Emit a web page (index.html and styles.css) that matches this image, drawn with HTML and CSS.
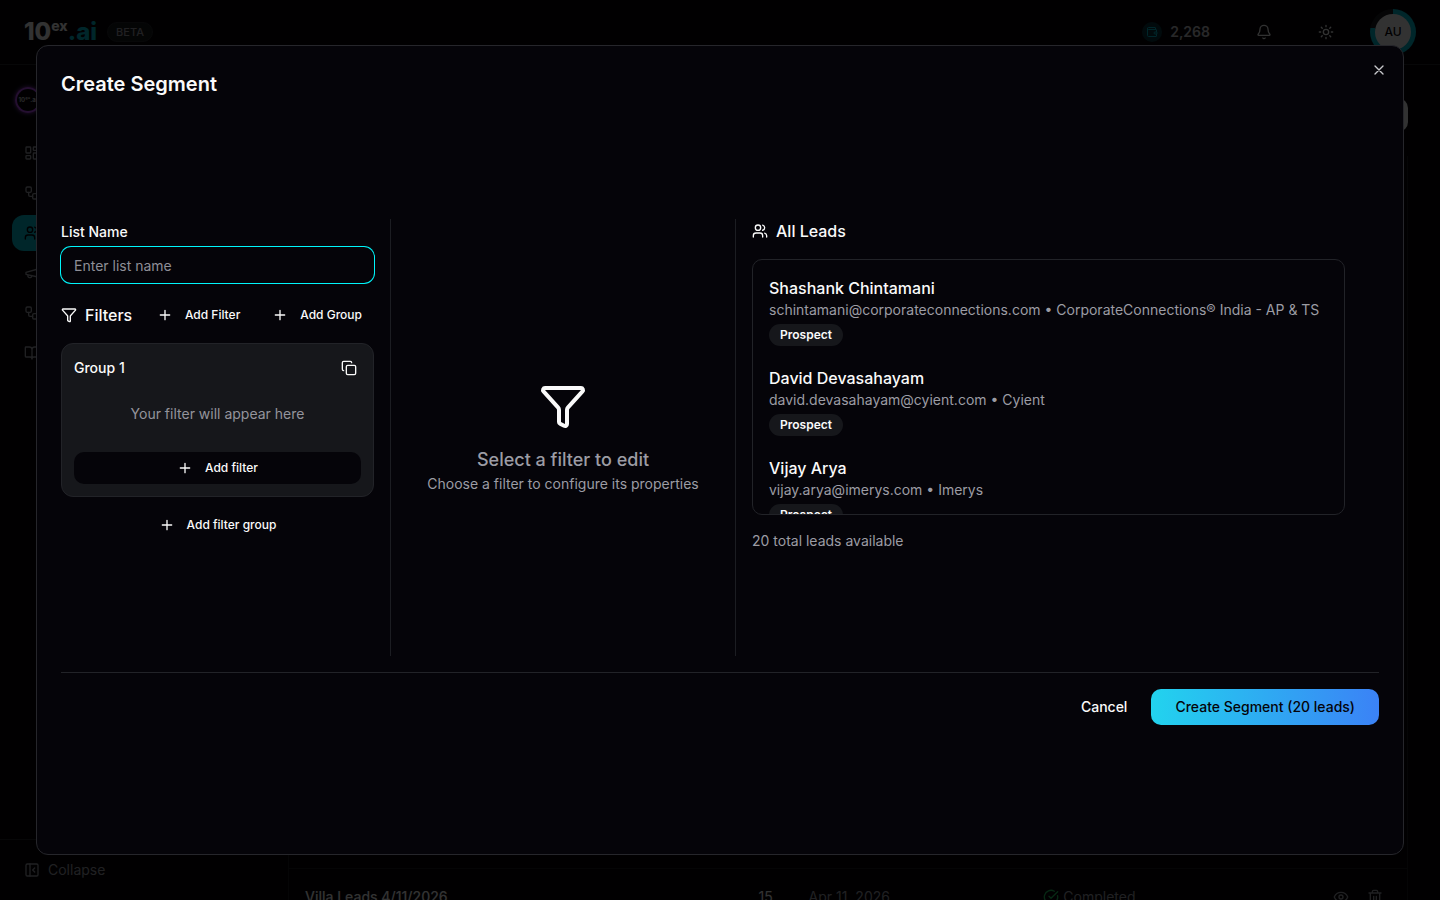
FILE: index.html
```html
<!DOCTYPE html>
<html lang="en">
<head>
    <meta charset="UTF-8">
    <meta name="viewport" content="width=device-width, initial-scale=1.0">
    <title>Create Segment</title>
    <link rel="stylesheet" href="styles.css">
</head>
<body>

    <!-- Icons -->
    <svg class="sprite" aria-hidden="true">
        <symbol id="i-plus" viewBox="0 0 24 24"><path d="M5 12h14M12 5v14"/></symbol>
        <symbol id="i-x" viewBox="0 0 24 24"><path d="M18 6 6 18M6 6l12 12"/></symbol>
        <symbol id="i-funnel" viewBox="0 0 24 24"><path d="M10 20a1 1 0 0 0 .553.895l2 1A1 1 0 0 0 14 21v-7a2 2 0 0 1 .517-1.341L21.74 4.67A1 1 0 0 0 21 3H3a1 1 0 0 0-.742 1.67l7.225 7.989A2 2 0 0 1 10 14z"/></symbol>
        <symbol id="i-copy" viewBox="0 0 24 24"><rect x="8" y="8" width="14" height="14" rx="2"/><path d="M4 16c-1.1 0-2-.9-2-2V4c0-1.100.9-2 2-2h10c1.100 0 2 .9 2 2"/></symbol>
        <symbol id="i-users" viewBox="0 0 24 24"><path d="M16 21v-2a4 4 0 0 0-4-4H6a4 4 0 0 0-4 4v2"/><circle cx="9" cy="7" r="4"/><path d="M22 21v-2a4 4 0 0 0-3-3.870M16 3.130a4 4 0 0 1 0 7.750"/></symbol>
        <symbol id="i-grid" viewBox="0 0 24 24"><rect x="3" y="3" width="7" height="9" rx="1"/><rect x="14" y="3" width="7" height="5" rx="1"/><rect x="14" y="12" width="7" height="9" rx="1"/><rect x="3" y="16" width="7" height="5" rx="1"/></symbol>
        <symbol id="i-flow" viewBox="0 0 24 24"><rect x="3" y="3" width="8" height="8" rx="2"/><path d="M7 11v4a2 2 0 0 0 2 2h4"/><rect x="13" y="13" width="8" height="8" rx="2"/></symbol>
        <symbol id="i-horn" viewBox="0 0 24 24"><path d="m3 11 18-5v12L3 14v-3zM11.600 16.800a3 3 0 1 1-5.800-1.600"/></symbol>
        <symbol id="i-book" viewBox="0 0 24 24"><path d="M12 7v14M3 18a1 1 0 0 1-1-1V4a1 1 0 0 1 1-1h5a4 4 0 0 1 4 4 4 4 0 0 1 4-4h5a1 1 0 0 1 1 1v13a1 1 0 0 1-1 1h-6a3 3 0 0 0-3 3 3 3 0 0 0-3-3z"/></symbol>
        <symbol id="i-collapse" viewBox="0 0 24 24"><rect x="3" y="3" width="18" height="18" rx="2"/><path d="M9 3v18M16 15l-3-3 3-3"/></symbol>
        <symbol id="i-wallet" viewBox="0 0 24 24"><path d="M19 7V4a1 1 0 0 0-1-1H5a2 2 0 0 0 0 4h15a1 1 0 0 1 1 1v4h-3a2 2 0 0 0 0 4h3a1 1 0 0 0 1-1v-2a1 1 0 0 0-1-1M3 5v14a2 2 0 0 0 2 2h15a1 1 0 0 0 1-1v-4"/></symbol>
        <symbol id="i-bell" viewBox="0 0 24 24"><path d="M10.268 21a2 2 0 0 0 3.464 0M3.262 15.326A1 1 0 0 0 4 17h16a1 1 0 0 0 .74-1.673C19.410 13.956 18 12.499 18 8A6 6 0 0 0 6 8c0 4.499-1.411 5.956-2.738 7.326"/></symbol>
        <symbol id="i-sun" viewBox="0 0 24 24"><circle cx="12" cy="12" r="4"/><path d="M12 2v2M12 20v2M4.930 4.930l1.410 1.410M17.660 17.660l1.410 1.410M2 12h2M20 12h2M6.340 17.660l-1.410 1.410M19.070 4.930l-1.410 1.410"/></symbol>
        <symbol id="i-check" viewBox="0 0 24 24"><path d="M21.801 10A10 10 0 1 1 17 3.335M9 11l3 3L22 4"/></symbol>
        <symbol id="i-eye" viewBox="0 0 24 24"><path d="M2.062 12.348a1 1 0 0 1 0-.696 10.750 10.750 0 0 1 19.876 0 1 1 0 0 1 0 .696 10.750 10.750 0 0 1-19.876 0"/><circle cx="12" cy="12" r="3"/></symbol>
        <symbol id="i-trash" viewBox="0 0 24 24"><path d="M3 6h18M19 6v14a2 2 0 0 1-2 2H7a2 2 0 0 1-2-2V6M8 6V4a2 2 0 0 1 2-2h4a2 2 0 0 1 2 2v2M10 11v6M14 11v6"/></symbol>
    </svg>

    <div class="app">
        <header class="topbar">
            <a class="logo" href="#">10<sup>ex</sup><span>.ai</span></a>
            <span class="beta">BETA</span>
            <div class="topbar-right">
                <div class="credits">
                    <span class="wallet"><svg class="icon-xs"><use href="#i-wallet"/></svg></span>
                    2,268
                </div>
                <button class="top-btn" aria-label="Notifications"><svg class="icon"><use href="#i-bell"/></svg></button>
                <button class="top-btn" aria-label="Theme"><svg class="icon"><use href="#i-sun"/></svg></button>
                <button class="avatar"><span>AU</span></button>
            </div>
        </header>

        <aside class="sidebar">
            <div class="workspace">10ᵉˣ.ai</div>
            <nav>
                <a href="#" aria-label="Dashboard"><svg class="icon"><use href="#i-grid"/></svg></a>
                <a href="#" aria-label="Workflows"><svg class="icon"><use href="#i-flow"/></svg></a>
                <a href="#" aria-label="Leads" class="active"><svg class="icon"><use href="#i-users"/></svg></a>
                <a href="#" aria-label="Campaigns"><svg class="icon"><use href="#i-horn"/></svg></a>
                <a href="#" aria-label="Automations"><svg class="icon"><use href="#i-flow"/></svg></a>
                <a href="#" aria-label="Docs"><svg class="icon"><use href="#i-book"/></svg></a>
            </nav>
            <button class="collapse"><svg class="icon"><use href="#i-collapse"/></svg>Collapse</button>
        </aside>

        <main class="main">
            <button class="page-btn" aria-label="New list"></button>
            <div class="table-card">
                <table>
                    <tr>
                        <td class="col-name">Villa Leads 4/11/2026</td>
                        <td class="col-count">15</td>
                        <td class="col-date">Apr 11, 2026</td>
                        <td class="col-status"><div class="status"><svg class="icon"><use href="#i-check"/></svg>Completed</div></td>
                        <td>
                            <div class="row-actions">
                                <button aria-label="View"><svg class="icon"><use href="#i-eye"/></svg></button>
                                <button aria-label="Delete"><svg class="icon"><use href="#i-trash"/></svg></button>
                            </div>
                        </td>
                    </tr>
                </table>
            </div>
        </main>
    </div>

    <!-- Create segment dialog -->
    <div class="overlay">
        <div class="modal" role="dialog" aria-labelledby="modal-title">
            <h2 id="modal-title">Create Segment</h2>
            <button class="close" aria-label="Close"><svg class="icon"><use href="#i-x"/></svg></button>

            <div class="modal-body">
                <section class="builder">
                    <label for="listName">List Name</label>
                    <input type="text" id="listName" placeholder="Enter list name">

                    <div class="filters-head">
                        <h3><svg class="icon"><use href="#i-funnel"/></svg>Filters</h3>
                        <div class="filters-actions">
                            <button class="btn-sm"><svg class="icon"><use href="#i-plus"/></svg>Add Filter</button>
                            <button class="btn-sm"><svg class="icon"><use href="#i-plus"/></svg>Add Group</button>
                        </div>
                    </div>

                    <div class="group">
                        <div class="group-head">
                            <span>Group 1</span>
                            <button class="copy" aria-label="Duplicate group"><svg class="icon"><use href="#i-copy"/></svg></button>
                        </div>
                        <p class="group-empty">Your filter will appear here</p>
                        <button class="btn-sm btn-dark"><svg class="icon"><use href="#i-plus"/></svg>Add filter</button>
                    </div>

                    <button class="btn-sm add-group"><svg class="icon"><use href="#i-plus"/></svg>Add filter group</button>
                </section>

                <section class="editor">
                    <svg class="icon-lg"><use href="#i-funnel"/></svg>
                    <p class="editor-title">Select a filter to edit</p>
                    <p class="muted">Choose a filter to configure its properties</p>
                </section>

                <section class="leads">
                    <h3><svg class="icon"><use href="#i-users"/></svg>All Leads</h3>
                    <ul class="lead-list">
                        <li>
                            <h4>Shashank Chintamani</h4>
                            <p class="muted">schintamani@corporateconnections.com • CorporateConnections® India - AP &amp; TS</p>
                            <span class="badge">Prospect</span>
                        </li>
                        <li>
                            <h4>David Devasahayam</h4>
                            <p class="muted">david.devasahayam@cyient.com • Cyient</p>
                            <span class="badge">Prospect</span>
                        </li>
                        <li>
                            <h4>Vijay Arya</h4>
                            <p class="muted">vijay.arya@imerys.com • Imerys</p>
                            <span class="badge">Prospect</span>
                        </li>
                    </ul>
                    <p class="muted">20 total leads available</p>
                </section>
            </div>

            <div class="modal-footer">
                <button class="btn">Cancel</button>
                <button class="btn btn-primary">Create Segment (20 leads)</button>
            </div>
        </div>
    </div>

</body>
</html>
```
FILE: styles.css
```css
* {
    box-sizing: border-box;
    margin: 0;
    padding: 0;
}
body {
    font-family: Inter, sans-serif;
    font-size: 14px;
    line-height: 20px;
    background: #050409;
    color: #fafafa;
    overflow: hidden;
}
button, input {
    font: inherit;
    color: inherit;
    background: none;
    border: none;
}
button {
    cursor: pointer;
}
a {
    color: inherit;
    text-decoration: none;
}
ul {
    list-style: none;
}
h3, h4 {
    font-size: 16px;
    font-weight: 500;
    line-height: 24px;
}
.sprite {
    display: none;
}
.icon, .icon-xs, .icon-lg {
    width: 16px;
    height: 16px;
    flex-shrink: 0;
    fill: none;
    stroke: currentColor;
    stroke-width: 2;
    stroke-linecap: round;
    stroke-linejoin: round;
}
.icon-xs {
    width: 12px;
    height: 12px;
}
.icon-lg {
    width: 48px;
    height: 48px;
}
.muted {
    color: #9c9ca4;
}

/* Page behind the dialog */
.app {
    display: grid;
    grid-template-columns: 289px 1fr;
    grid-template-rows: 65px 1fr;
    height: 100vh;
}
.topbar {
    grid-column: 1 / -1;
    display: flex;
    align-items: center;
    gap: 10px;
    padding: 0 24px;
    border-bottom: 1px solid #26262b;
}
.logo {
    font-size: 24px;
    font-weight: 800;
    line-height: 32px;
}
.logo sup {
    font-size: 14px;
    line-height: 0;
}
.logo span {
    color: #00bccf;
}
.beta {
    font-size: 11px;
    line-height: 18px;
    font-weight: 500;
    color: #a1a1aa;
    background: #18191d;
    border: 1px solid #26262b;
    border-radius: 12px;
    padding: 0 8px;
}
.topbar-right {
    display: flex;
    align-items: center;
    margin-left: auto;
}
.credits {
    display: flex;
    align-items: center;
    gap: 8px;
    font-weight: 600;
    color: #c8c8cc;
    padding: 0 10px;
    margin-right: 28px;
}
.wallet {
    display: flex;
    align-items: center;
    justify-content: center;
    width: 20px;
    height: 20px;
    border-radius: 50%;
    color: #00bccf;
    background: #06363e;
}
.top-btn {
    display: flex;
    justify-content: center;
    width: 32px;
    margin-right: 30px;
    color: #fafafa;
}
.avatar {
    display: flex;
    width: 46px;
    height: 46px;
    padding: 5px;
    margin-left: -2px;
    border-radius: 50%;
    background: conic-gradient(#00bccf 78%, #1c1d22 0);
}
.avatar span {
    width: 36px;
    line-height: 36px;
    border-radius: 50%;
    background: #fafafa;
    color: #050409;
    font-size: 12px;
    font-weight: 500;
}
.sidebar {
    display: flex;
    flex-direction: column;
    border-right: 1px solid #1c1d22;
}
.workspace {
    width: 26px;
    height: 26px;
    margin: 22px 15px;
    border: 2px solid #b44cf0;
    border-right-color: #4f7cff;
    border-radius: 50%;
    box-shadow: 0 0 4px #b44cf0;
    font-size: 6px;
    line-height: 22px;
    font-weight: 700;
    text-align: center;
    color: #c8c8cc;
    white-space: nowrap;
}
.sidebar nav {
    display: flex;
    flex-direction: column;
    gap: 4px;
    padding: 0 12px;
}
.sidebar nav a {
    display: flex;
    align-items: center;
    height: 36px;
    padding: 0 12px;
    border-radius: 12px;
    color: #a1a1aa;
}
.sidebar nav a.active {
    background: #00bccf;
    color: #050409;
}
.collapse {
    display: flex;
    align-items: center;
    gap: 8px;
    height: 61px;
    margin-top: auto;
    padding: 0 24px;
    border-top: 1px solid #26262b;
    color: #a1a1aa;
}
.main {
    display: flex;
    flex-direction: column;
    padding-right: 32px;
    margin-bottom: -25px;
}
.page-btn {
    align-self: flex-end;
    width: 120px;
    height: 34px;
    margin: 33px 0 24px;
    border-radius: 10px;
    background: #fafafa;
}
.table-card {
    flex: 1;
    display: flex;
    align-items: flex-end;
    border-right: 1px solid #1c1d22;
}
table {
    width: 100%;
    border-collapse: collapse;
}
td {
    height: 57px;
    border-top: 1px solid #1c1d22;
    text-align: left;
    color: #a1a1aa;
}
.col-name {
    width: 42%;
    padding-left: 16px;
    font-weight: 500;
    color: #fafafa;
}
.col-count {
    width: 50px;
    color: #fafafa;
}
.col-date {
    width: 21%;
}
.status {
    display: flex;
    align-items: center;
    gap: 4px;
}
.status .icon {
    color: #22c55e;
}
.row-actions {
    display: flex;
    justify-content: flex-end;
    gap: 18px;
    padding-right: 24px;
}
.row-actions button {
    display: flex;
}

/* Dialog */
.overlay {
    position: fixed;
    inset: 0;
    display: flex;
    align-items: center;
    justify-content: center;
    background: rgba(0, 0, 0, 0.8);
}
.modal {
    position: relative;
    display: grid;
    gap: 16px;
    width: 95vw;
    height: 90vh;
    padding: 24px;
    background: #050409;
    border: 1px solid #26262b;
    border-radius: 12px;
}
.modal h2 {
    font-size: 20px;
    font-weight: 600;
    line-height: 28px;
}
.close {
    position: absolute;
    top: 16px;
    right: 16px;
    display: flex;
    color: #c8c8cc;
}
.modal-body {
    display: grid;
    grid-template-columns: 330fr 345fr 643fr;
}
.builder {
    padding-right: 16px;
    border-right: 1px solid #1c1d22;
}
.builder label {
    display: block;
    font-weight: 500;
    line-height: 24px;
    margin: 1px 0 3px;
}
.builder input {
    display: block;
    width: 100%;
    height: 36px;
    padding: 0 13px;
    border-radius: 10px;
    outline: none;
    box-shadow: 0 0 0 1px #00f5fa;
}
.builder input::placeholder {
    color: #8f8f97;
    opacity: 1;
}
.filters-head, .filters-actions, .filters-head h3, .leads h3 {
    display: flex;
    align-items: center;
    gap: 8px;
}
.filters-head {
    justify-content: space-between;
    margin: 16px 0 12px;
}
.btn-sm {
    display: flex;
    align-items: center;
    justify-content: center;
    gap: 12px;
    height: 32px;
    padding: 0 12px;
    border-radius: 10px;
    font-size: 12px;
    font-weight: 500;
    white-space: nowrap;
}
.group {
    padding: 12px;
    background: #16171b;
    border: 1px solid #222328;
    border-radius: 12px;
}
.group-head {
    display: flex;
    align-items: center;
    justify-content: space-between;
    font-weight: 500;
}
.copy {
    display: flex;
    padding: 4px;
}
.group-empty {
    padding: 24px 0 28px;
    text-align: center;
    color: #94949c;
}
.btn-dark {
    width: 100%;
    background: #050409;
}
.add-group {
    margin: 12px auto 0;
}
.editor {
    display: flex;
    flex-direction: column;
    align-items: center;
    justify-content: center;
    border-right: 1px solid #1c1d22;
}
.editor-title {
    margin-top: 16px;
    font-size: 18px;
    line-height: 28px;
    font-weight: 500;
    color: #9c9ca4;
}
.leads {
    padding: 0 34px 0 16px;
}
.lead-list {
    height: 256px;
    margin: 16px 0;
    padding: 16px;
    border: 1px solid #222328;
    border-radius: 10px;
    overflow: hidden;
}
.lead-list li {
    margin-bottom: 20px;
}
.badge {
    display: block;
    width: fit-content;
    margin-top: 4px;
    padding: 3px 11px;
    border-radius: 11px;
    background: #16171b;
    font-size: 12px;
    line-height: 16px;
    font-weight: 600;
}
.modal-footer {
    display: flex;
    align-items: flex-start;
    justify-content: flex-end;
    gap: 8px;
    padding-top: 16px;
    border-top: 1px solid #222328;
}
.btn {
    height: 36px;
    padding: 0 16px;
    border-radius: 10px;
    font-weight: 500;
}
.btn-primary {
    padding: 0 24px;
    color: #050409;
    background: linear-gradient(to right, #22d3ee, #3b82f6);
}
```
